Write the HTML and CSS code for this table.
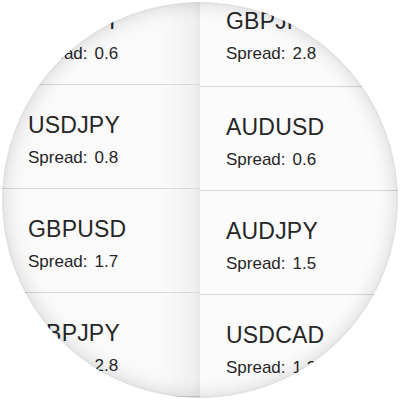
FILE: index.html
```html
<!DOCTYPE html>
<html>
<head>
<meta charset="utf-8">
<link rel="stylesheet" href="styles.css">
</head>
<body>
<div class="lens">
  <div class="grid">
    <div class="col col-left">
      <div class="cell"><div class="pair">GBPJPY</div><div class="spread"><span>Spread:</span><span>0.6</span></div></div>
      <div class="cell"><div class="pair">USDJPY</div><div class="spread"><span>Spread:</span><span>0.8</span></div></div>
      <div class="cell"><div class="pair">GBPUSD</div><div class="spread"><span>Spread:</span><span>1.7</span></div></div>
      <div class="cell"><div class="pair">GBPJPY</div><div class="spread"><span>Spread:</span><span>2.8</span></div></div>
    </div>
    <div class="col col-right">
      <div class="cell"><div class="pair">GBPJPY</div><div class="spread"><span>Spread:</span><span>2.8</span></div></div>
      <div class="cell"><div class="pair">AUDUSD</div><div class="spread"><span>Spread:</span><span>0.6</span></div></div>
      <div class="cell"><div class="pair">AUDJPY</div><div class="spread"><span>Spread:</span><span>1.5</span></div></div>
      <div class="cell"><div class="pair">USDCAD</div><div class="spread"><span>Spread:</span><span>1.3</span></div></div>
    </div>
  </div>
  <div class="rim"></div>
</div>
</body>
</html>
```
FILE: styles.css
```css
html, body {
  margin: 0;
  padding: 0;
  background: #ffffff;
}
body {
  width: 400px;
  height: 400px;
  display: flex;
  align-items: center;
  justify-content: center;
  font-family: "Liberation Sans", Arial, sans-serif;
  color: #262626;
}
.lens {
  position: relative;
  width: 396px;
  height: 396px;
  border-radius: 50%;
  overflow: hidden;
  background: #fafafa;
}
.grid {
  display: grid;
  grid-template-columns: 198px 198px;
  margin-top: -21px;
}
.col-left {
  background: linear-gradient(to right, #fafafa 0, #fafafa 160px, #f1f1f1 190px, #e9e9e9 198px);
}
.col-right {
  background: #fbfbfb;
}
.col-right .cell:first-child {
  height: 106px;
}
.cell {
  height: 104px;
  box-sizing: border-box;
  border-bottom: 1px solid #d6d6e0;
  padding: 29px 0 0 26px;
}
.pair {
  font-size: 23px;
  line-height: 23px;
  letter-spacing: 0.2px;
}
.spread {
  display: flex;
  gap: 7px;
  margin-top: 11px;
  font-size: 17px;
  line-height: 19px;
}
.rim {
  position: absolute;
  inset: 0;
  border-radius: 50%;
  box-shadow: inset 0 0 18px 4px rgba(0, 0, 0, 0.12), inset 0 0 3px 1px rgba(0, 0, 0, 0.05);
}
```
